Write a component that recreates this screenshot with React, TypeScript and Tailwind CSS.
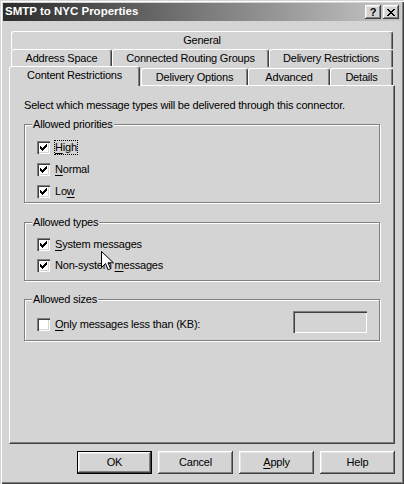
import React from "react";

const raised =
  "shadow-[inset_-1px_-1px_#404040,inset_1px_1px_#ffffff,inset_-2px_-2px_#808080,inset_2px_2px_#e6e6e6]";
const sunken =
  "shadow-[inset_1px_1px_#808080,inset_2px_2px_#404040,inset_-1px_-1px_#ffffff,inset_-2px_-2px_#d4d4d4]";

function Check({ checked }: { checked: boolean }) {
  return (
    <span className={`w-[13px] h-[13px] shrink-0 bg-white flex items-center justify-center ${sunken}`}>
      {checked && (
        <svg width="7" height="7" viewBox="0 0 7 7" shapeRendering="crispEdges">
          <rect x="6" y="0" width="1" height="1" />
          <rect x="5" y="1" width="2" height="1" />
          <rect x="0" y="2" width="1" height="1" />
          <rect x="4" y="2" width="3" height="1" />
          <rect x="0" y="3" width="2" height="1" />
          <rect x="3" y="3" width="3" height="1" />
          <rect x="0" y="4" width="5" height="1" />
          <rect x="1" y="5" width="3" height="1" />
          <rect x="2" y="6" width="1" height="1" />
        </svg>
      )}
    </span>
  );
}

function CheckRow({ checked, focus, children }: { checked: boolean; focus?: boolean; children: React.ReactNode }) {
  return (
    <div className="flex items-center h-[13px]">
      <Check checked={checked} />
      {focus ? (
        <span className="ml-[4px] border border-dotted border-black leading-[13px]">{children}</span>
      ) : (
        <span className="ml-[5px] leading-[13px]">{children}</span>
      )}
    </div>
  );
}

function Group({ title, className, children }: { title: string; className: string; children: React.ReactNode }) {
  return (
    <div className={`relative w-[356px] border border-[#808080] shadow-[inset_1px_1px_#ffffff,1px_1px_#ffffff] ${className}`}>
      <span className="absolute -top-[7px] left-[7px] px-[1px] bg-[#d4d4d4] leading-[13px]">{title}</span>
      {children}
    </div>
  );
}

function Tab({ label, className }: { label: string; className: string }) {
  return (
    <div
      className={`flex items-center justify-center shrink-0 bg-[#d4d4d4] border-l border-t border-r border-white border-r-[#404040] rounded-t-[3px] shadow-[inset_-1px_0_#808080] ${className}`}
    >
      {label}
    </div>
  );
}

function Button({ label, def }: { label: React.ReactNode; def?: boolean }) {
  return (
    <div
      className={`w-[75px] h-[23px] flex items-center justify-center bg-[#d4d4d4] ${
        def ? "border border-black" : ""
      } ${raised}`}
    >
      {label}
    </div>
  );
}

function U({ children }: { children: React.ReactNode }) {
  return <span className="underline underline-offset-[2px] decoration-1">{children}</span>;
}

export default function App() {
  return (
    <div
      className="relative w-[404px] h-[484px] p-[3px] bg-[#d4d4d4] text-[11px] tracking-[-0.2px] text-black font-['Liberation_Sans',Arial,sans-serif] shadow-[inset_1px_1px_#d4d4d4,inset_2px_2px_#ffffff,inset_-1px_-1px_#404040,inset_-2px_-2px_#808080] overflow-hidden"
    >
      {/* title bar */}
      <div className="h-[18px] flex items-center justify-between pl-[2px] pr-[2px] bg-linear-to-r from-[#2c2c2c] via-[#7a7a7a] to-[#c8c8c8]">
        <span className="text-white font-bold text-[11.5px] tracking-normal">SMTP to NYC Properties</span>
        <div className="flex gap-[2px]">
          <div className={`w-[16px] h-[14px] bg-[#d4d4d4] flex items-center justify-center font-bold text-[11px] leading-none ${raised}`}>
            ?
          </div>
          <div className={`w-[16px] h-[14px] bg-[#d4d4d4] flex items-center justify-center ${raised}`}>
            <svg width="8" height="7" viewBox="0 0 8 7" shapeRendering="crispEdges">
              <path d="M0 0h2v1H0zM6 0h2v1H6zM1 1h2v1H1zM5 1h2v1H5zM2 2h4v1H2zM3 3h2v1H3zM2 4h4v1H2zM1 5h2v1H1zM5 5h2v1H5zM0 6h2v1H0zM6 6h2v1H6z" />
            </svg>
          </div>
        </div>
      </div>

      {/* tabs */}
      <div className="mt-[10px] ml-[6px] w-[386px]">
        <div className="pl-[2px]">
          <Tab label="General" className="w-[382px] h-[18px]" />
        </div>
        <div className="pl-[2px] flex">
          <Tab label="Address Space" className="w-[101px] h-[18px]" />
          <Tab label="Connected Routing Groups" className="w-[157px] h-[18px]" />
          <Tab label="Delivery Restrictions" className="w-[124px] h-[18px]" />
        </div>
        <div className="flex items-end h-[18px]">
          <Tab label="Content Restrictions" className="relative z-10 w-[131px] h-[20px] -mb-px pb-[2px]" />
          <Tab label="Delivery Options" className="ml-px w-[107px] h-[17px]" />
          <Tab label="Advanced" className="w-[82px] h-[17px]" />
          <Tab label="Details" className="w-[63px] h-[17px]" />
        </div>

        {/* panel */}
        <div className="w-[386px] h-[359px] border border-white border-r-[#404040] border-b-[#404040] shadow-[inset_-1px_-1px_#808080] pl-[14px] pt-[13px]">
          <div className="leading-[13px]">Select which message types will be delivered through this connector.</div>

          <Group title="Allowed priorities" className="mt-[12px] pt-[16px] pb-[4px] pl-[12px] flex flex-col gap-[9px]">
            <CheckRow checked focus>
              <U>H</U>igh
            </CheckRow>
            <CheckRow checked>
              <U>N</U>ormal
            </CheckRow>
            <CheckRow checked>
              Lo<U>w</U>
            </CheckRow>
          </Group>

          <Group title="Allowed types" className="mt-[19px] pt-[15px] pb-[8px] pl-[12px] flex flex-col gap-[8px]">
            <CheckRow checked>
              <U>S</U>ystem messages
            </CheckRow>
            <CheckRow checked>
              Non-system <U>m</U>essages
            </CheckRow>
          </Group>

          <Group title="Allowed sizes" className="mt-[18px] pt-[11px] pb-[7px] pl-[12px] pr-[12px] flex items-start justify-between">
            <div className="mt-[7px]">
              <CheckRow checked={false}>
                <U>O</U>nly messages less than (KB):
              </CheckRow>
            </div>
            <div className={`w-[74px] h-[22px] bg-[#d4d4d4] ${sunken}`} />
          </Group>
        </div>

        {/* buttons */}
        <div className="mt-[7px] flex justify-end gap-[6px]">
          <Button label="OK" def />
          <Button label="Cancel" />
          <Button
            label={
              <span>
                <U>A</U>pply
              </span>
            }
          />
          <Button label="Help" />
        </div>
      </div>

      {/* mouse pointer */}
      <svg className="absolute left-[101px] top-[251px]" width="13" height="21" viewBox="0 0 13 21">
        <path
          d="M0.5 0.5 V16.5 L4.5 12.5 L7.2 18.8 L9.6 17.8 L7 11.8 H12.5 Z"
          fill="#ffffff"
          stroke="#000000"
          strokeWidth="1"
        />
      </svg>
    </div>
  );
}
